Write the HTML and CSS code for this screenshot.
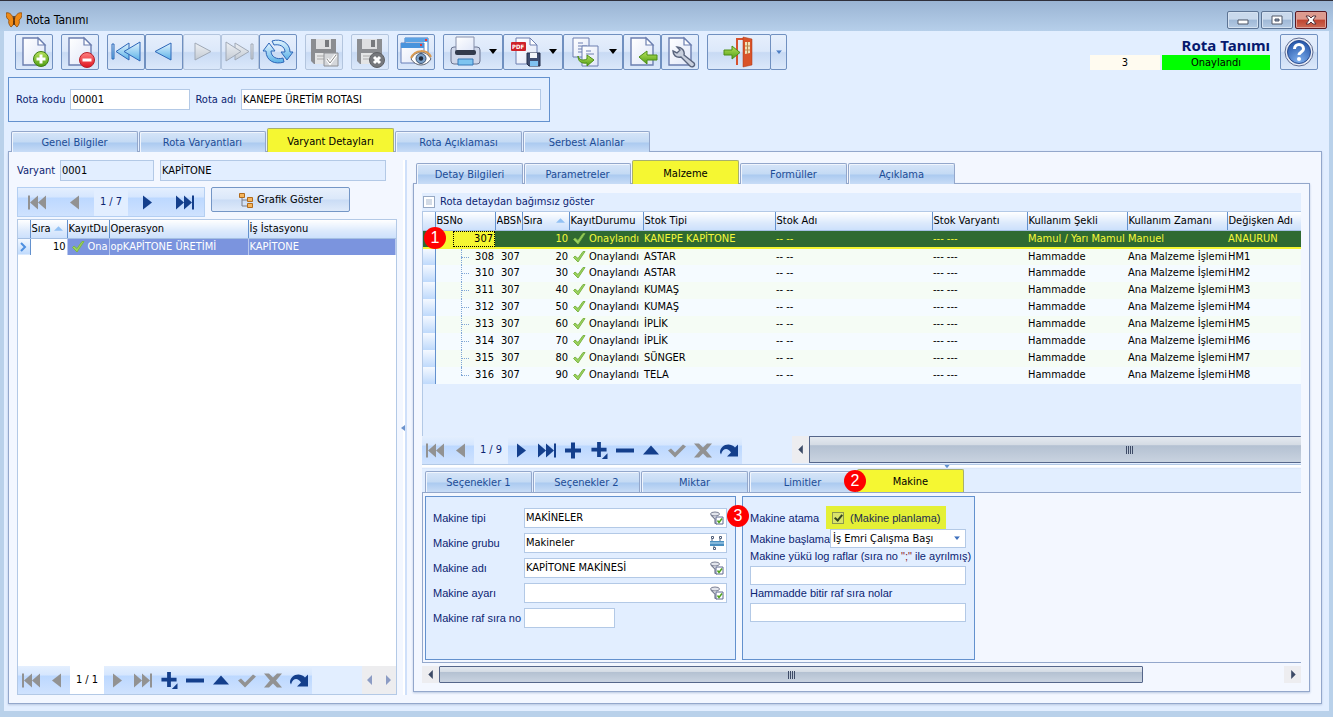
FILE: index.html
```html
<!DOCTYPE html>
<html lang="tr">
<head>
<meta charset="utf-8">
<title>Rota Tanımı</title>
<link rel="stylesheet" href="styles.css">
</head>
<body>
<svg class="defs" aria-hidden="true">
  <defs>
    <linearGradient id="blue" x1="0" y1="0" x2="0" y2="1"><stop offset="0" stop-color="#e2f4ff"/><stop offset="1" stop-color="#58b0e6"/></linearGradient>
    <linearGradient id="silver" x1="0" y1="0" x2="0" y2="1"><stop offset="0" stop-color="#eef1f5"/><stop offset="1" stop-color="#c3cad3"/></linearGradient>
    <linearGradient id="paper" x1="0" y1="0" x2="1" y2="1"><stop offset="0" stop-color="#fff"/><stop offset="1" stop-color="#dfe6f8"/></linearGradient>
    <linearGradient id="green" x1="0" y1="0" x2="0" y2="1"><stop offset="0" stop-color="#b9e35c"/><stop offset="1" stop-color="#4f9d14"/></linearGradient>
    <linearGradient id="red" x1="0" y1="0" x2="0" y2="1"><stop offset="0" stop-color="#ff8080"/><stop offset="1" stop-color="#e0151f"/></linearGradient>
    <radialGradient id="helpfill" cx=".5" cy=".9" r=".9"><stop offset="0" stop-color="#7fb0ee"/><stop offset="1" stop-color="#2354a8"/></radialGradient>
  </defs>
  <symbol id="n-first" viewBox="0 0 20 16"><path d="M1 1h2v14H1zM11 1v14L3 8zM19 1v14l-8-7z"/></symbol>
  <symbol id="n-last" viewBox="0 0 20 16"><path d="M17 1h2v14h-2zM9 1v14l8-7zM1 1v14l8-7z"/></symbol>
  <symbol id="n-prev" viewBox="0 0 20 16"><path d="M14 1v14L5 8z"/></symbol>
  <symbol id="n-next" viewBox="0 0 20 16"><path d="M6 1v14l9-7z"/></symbol>
  <symbol id="n-plus" viewBox="0 0 20 16"><path d="M8 0h4v6h6v4h-6v6H8v-6H2V6h6z"/></symbol>
  <symbol id="n-plusdot" viewBox="0 0 20 18"><path d="M8 0h4v6h6v4h-6v6H8v-6H2V6h6zM19 12v6h-6z"/></symbol>
  <symbol id="n-minus" viewBox="0 0 20 16"><path d="M1 6h18v4H1z"/></symbol>
  <symbol id="n-up" viewBox="0 0 20 16"><path d="M10 3l8 9H2z"/></symbol>
  <symbol id="n-check" viewBox="0 0 20 16"><path d="M1 8l3-2 4 4 8-8 3 2L8 15z"/></symbol>
  <symbol id="n-x" viewBox="0 0 20 16"><path d="M1 1h5l4 4 4-4h5l-6 7 6 7h-5l-4-4-4 4H1l6-7z"/></symbol>
  <symbol id="n-redo" viewBox="0 0 20 16"><path d="M1 10C1 3 10-1 16 5l3-3v12H8l4-4C9 5 4 5 2 12z"/></symbol>
  <symbol id="ok" viewBox="0 0 14 14"><path d="M1.500 8.500l1.500-1.500 3 2.500 5-7h2L6 13z" fill="#9ad25c" stroke="#7db548" stroke-width="1"/></symbol>
  <symbol id="page" viewBox="0 0 32 32"><path d="M5 2h15l7 7v20H5z" fill="url(#paper)" stroke="#6c7fb0" stroke-width="1.4"/><path d="M20 2v7h7z" fill="#fff" stroke="#6c7fb0" stroke-width="1.2"/></symbol>
  <symbol id="floppy" viewBox="0 0 32 32"><path d="M3 3h25v25H6l-3-3z" fill="#8b8d91"/><path d="M8 3h15v10H8z" fill="#dedfe1"/><path d="M17 4h4v7h-4z" fill="#77797d"/><path d="M7 17h18v11H7z" fill="#e4e5e6"/><path d="M9 20h14M9 23h14" stroke="#aaa"/></symbol>
  <symbol id="lookup" viewBox="0 0 14 14"><ellipse cx="5" cy="3" rx="4.500" ry="2" fill="#e3e5ec" stroke="#7b8094"/><path d="M1 4l4 4v4l2 1" fill="none" stroke="#7b8094" stroke-width="1.3"/><path d="M6 6h7v7H6z" fill="#fff" stroke="#5e6890"/><path d="M7.500 9.500l1.500 2 3-4" fill="none" stroke="#4fa31c" stroke-width="1.500"/></symbol>
  <symbol id="tri" viewBox="0 0 8 6"><path d="M0 0h8L4 5z"/></symbol>
</svg>

<header class="titlebar">
  <svg class="i16" viewBox="0 0 16 16"><path d="M7.500 7C6 2 3 0 0 1c0 4 1 6 3 7-1 2 0 5 2 7 2-1 3-4 3-6 0 2 1 5 3 6 2-2 3-5 2-7 2-1 3-3 3-7-3-1-6 1-7.500 6z" fill="#ef8a16" stroke="#8a4a0c" stroke-width=".8"/><path d="M8 4v9" stroke="#4b2708" stroke-width="1.500"/></svg>
  <h1 class="title">Rota Tanımı</h1>
  <button class="win" aria-label="Küçült"><svg viewBox="0 0 30 16"><path d="M10 8h10v4H10z" fill="#fff" stroke="#4e5766"/></svg></button>
  <button class="win" aria-label="Büyüt"><svg viewBox="0 0 30 16"><path d="M10 4h10v8H10z" fill="#fff" stroke="#4e5766"/><path d="M13 7h4v2h-4z" fill="#8296b3" stroke="#4e5766"/></svg></button>
  <button class="win win-close" aria-label="Kapat"><svg viewBox="0 0 30 16"><path d="M10 4h3l2 2 2-2h3l-3 4 3 4h-3l-2-2-2 2h-3l3-4z" fill="#fff" stroke="#55323a"/></svg></button>
</header>

<main class="frame">
  <div class="toolbar">
    <div class="group"><button class="tool" aria-label="Yeni"><svg viewBox="0 0 32 32"><use href="#page"/><circle cx="23" cy="23" r="7.500" fill="url(#green)" stroke="#3e7d12"/><path d="M23 18.500v9M18.500 23h9" stroke="#fff" stroke-width="3"/></svg></button></div>
    <div class="group"><button class="tool" aria-label="Sil"><svg viewBox="0 0 32 32"><use href="#page"/><circle cx="23" cy="24" r="7.500" fill="url(#red)" stroke="#b5202a"/><path d="M18.500 24h9" stroke="#fff" stroke-width="3"/></svg></button></div>
    <div class="group">
      <button class="tool" aria-label="İlk"><svg viewBox="0 0 32 32"><g fill="url(#blue)" stroke="#2d66b8"><path d="M2 8h2v15H2z"/><path d="M19 7v17L6 15.500z"/><path d="M30 6v19L14 15.500z"/></g></svg></button>
      <button class="tool" aria-label="Önceki"><svg viewBox="0 0 32 32"><path d="M23 7v17L7 15.500z" fill="url(#blue)" stroke="#2d66b8"/></svg></button>
      <button class="tool" disabled aria-label="Sonraki"><svg viewBox="0 0 32 32"><path d="M9 7v17l16-8.500z" fill="url(#silver)" stroke="#a0a9b6"/></svg></button>
      <button class="tool" disabled aria-label="Son"><svg viewBox="0 0 32 32"><g fill="url(#silver)" stroke="#a0a9b6"><path d="M11 7v17l14-8.500z"/><path d="M2 6v19l15-9.500z"/><path d="M27 8h2v15h-2z"/></g></svg></button>
      <button class="tool" aria-label="Yenile"><svg viewBox="0 0 32 32"><g fill="url(#blue)" stroke="#2d66b8"><path d="M1 15l6-8 6 8h-4c0 6 6 9 12 7l1 4C13 29 4 25 4 15z"/><path d="M31 16l-6 8-6-8h4c0-6-6-8-11-7L10 5c9-3 18 2 18 11z"/></g></svg></button>
    </div>
    <div class="group"><button class="tool" disabled aria-label="Kaydet"><svg viewBox="0 0 32 32"><use href="#floppy"/><path d="M16 17h14v13H16z" fill="#d5d7da" stroke="#8e9094"/><path d="M19 23l3 4 6-8" stroke="#fff" stroke-width="3" fill="none"/><path d="M19 23l3 4 6-8" stroke="#888" fill="none"/></svg></button></div>
    <div class="group"><button class="tool" disabled aria-label="Vazgeç"><svg viewBox="0 0 32 32"><use href="#floppy"/><circle cx="23" cy="24" r="7.500" fill="#76787c" stroke="#5f6165"/><path d="M20 21l6 6M26 21l-6 6" stroke="#fff" stroke-width="3"/></svg></button></div>
    <div class="group"><button class="tool" aria-label="İzle"><svg viewBox="0 0 32 32"><path d="M5 2h23v18H5z" fill="#fff" stroke="#3d7bc8"/><path d="M5 2h23v4H5z" fill="#5ca3e4"/><path d="M25 3h2v2h-2z" fill="#e33"/><path d="M1 7h23v20H1z" fill="url(#paper)" stroke="#6880b8"/><path d="M1 7h23v5H1z" fill="#4993dc"/><path d="M20 8h2v2h-2z" fill="#e33"/><path d="M11 23c5-9 15-9 20 0-5 8-15 8-20 0z" fill="#fff" stroke="#5a5f6c"/><path d="M11 22c4-9 16-9 20-1" fill="none" stroke="#d99a51" stroke-width="2"/><circle cx="21" cy="22.500" r="5" fill="#7ba0c8" stroke="#3c5270"/><circle cx="21" cy="22.500" r="2.200" fill="#1e2838"/></svg></button></div>
    <div class="group">
      <button class="tool tool-menu" aria-label="Yazdır"><svg viewBox="0 0 32 32"><rect x="1" y="11" width="29" height="17" rx="3" fill="#cfd7ea" stroke="#68738f"/><path d="M6 1h18v14H6z" fill="url(#paper)" stroke="#8690ab"/><rect x="5" y="14" width="21" height="5" rx="2" fill="#333b4d"/><path d="M8 23h15v6H8z" fill="#7dc4f0" stroke="#3979b8"/></svg><svg class="caret" viewBox="0 0 8 6"><use href="#tri"/></svg></button>
      <button class="tool tool-menu" aria-label="PDF kaydet"><svg viewBox="0 0 32 32"><path d="M6 2h14l7 7v19H6z" fill="url(#paper)" stroke="#6c7fb0"/><path d="M20 2v7h7z" fill="#fff" stroke="#6c7fb0"/><rect x="1" y="6" width="15" height="9" rx="1" fill="#cf2229"/><text x="2" y="13" class="pdf">PDF</text><path d="M17 17h13v13H19l-2-2z" fill="#3f4d70" stroke="#222d48"/><path d="M20 17h7v5h-7z" fill="#f3f5fa"/><path d="M20 25h8v5h-8z" fill="#7fc1f0"/></svg><svg class="caret" viewBox="0 0 8 6"><use href="#tri"/></svg></button>
      <button class="tool tool-menu" aria-label="Kopyala"><svg viewBox="0 0 32 32"><path d="M3 2h16v19H3z" fill="url(#paper)" stroke="#6c7fb0"/><path d="M8 7h5M8 10h9M8 13h9M8 16h5" stroke="#6c7fb0"/><path d="M12 10h16v20H12z" fill="url(#paper)" stroke="#6c7fb0"/><path d="M16 15h5M16 18h8" stroke="#6c7fb0"/><path d="M8 20c1 4 5 5 9 3v-4l7 5-7 6v-3C11 28 8 25 8 20z" fill="url(#green)" stroke="#4d8e17"/></svg><svg class="caret" viewBox="0 0 8 6"><use href="#tri"/></svg></button>
      <button class="tool" aria-label="Geri al"><svg viewBox="0 0 32 32"><use href="#page"/><path d="M13 21l8-6v4h10v5H21v4z" fill="url(#green)" stroke="#4d8e17"/></svg></button>
      <button class="tool" aria-label="Ayarlar"><svg viewBox="0 0 32 32"><use href="#page"/><path d="M13 11c5 0 8 4 7 8l10 8c2 3-2 5-4 3l-9-9c-5 1-8-2-8-6l4 2 3-3z" fill="#c8cfdd" stroke="#59647d" stroke-width="1.400"/></svg></button>
    </div>
    <div class="group">
      <button class="tool tool-exit" aria-label="Çıkış"><svg viewBox="0 0 32 32"><path d="M14 29V3h9" fill="none" stroke="#d6512e" stroke-width="2"/><path d="M20 1l9 2v26l-9 2z" fill="#d95328" stroke="#a93716" stroke-width=".5"/><path d="M22 6h5v11l-5 1z" fill="#f2e2b8"/><path d="M24.500 6v12M22 10h5M22 14h5" stroke="#b9864a"/><path d="M1 14h8v-4l8 6.500L9 23v-4H1z" fill="url(#green)" stroke="#4d8e17"/></svg></button><button class="tool tool-split" aria-label="Çıkış seçenekleri"><svg viewBox="0 0 8 6"><use href="#tri"/></svg></button>
    </div>
    <div class="status">
      <h2 class="heading">Rota Tanımı</h2>
      <div class="chips"><span class="chip chip-no">3</span><span class="chip chip-ok">Onaylandı</span></div>
    </div>
    <button class="tool" aria-label="Yardım"><svg viewBox="0 0 32 32"><circle cx="16" cy="16" r="14" fill="#e8ecf6" stroke="#5d6b90"/><circle cx="16" cy="16" r="11.500" fill="url(#helpfill)" stroke="#2a4c90"/><path d="M11.500 13c0-6 9-6 9 0 0 3-4.500 3-4.500 6" fill="none" stroke="#fff" stroke-width="3"/><circle cx="16" cy="23" r="2" fill="#fff"/></svg></button>
  </div>

  <section class="keybox">
    <label for="kod">Rota kodu</label><input id="kod" class="field w120" value="00001">
    <label for="ad">Rota adı</label><input id="ad" class="field w300" value="KANEPE ÜRETİM ROTASI">
  </section>

  <div class="tabs tabs-main" role="tablist">
    <button class="tab" role="tab">Genel Bilgiler</button><button class="tab" role="tab">Rota Varyantları</button><button class="tab on" role="tab" aria-selected="true">Varyant Detayları</button><button class="tab" role="tab">Rota Açıklaması</button><button class="tab" role="tab">Serbest Alanlar</button>
  </div>

  <section class="sheet main-sheet">
    <div class="left">
      <div class="variant">
        <label for="var">Varyant</label><input id="var" class="field ro w94" value="0001" readonly><input class="field ro w226" value="KAPİTONE" readonly aria-label="Varyant adı">
      </div>
      <div class="navrow">
        <div class="nav nav-wide">
          <button disabled aria-label="İlk"><svg><use href="#n-first"/></svg></button><button disabled aria-label="Önceki"><svg><use href="#n-prev"/></svg></button><span class="count">1 / 7</span><button aria-label="Sonraki"><svg><use href="#n-next"/></svg></button><button aria-label="Son"><svg><use href="#n-last"/></svg></button>
        </div>
        <button class="graph"><svg class="i16" viewBox="0 0 16 16"><path d="M4 5v9h6M4 8h6" fill="none" stroke="#7d7d86"/><g fill="#f5b55c" stroke="#b06a1c"><path d="M1.500 1.500h5v4h-5zM9.500 5.500h5v4h-5zM9.500 11.500h5v4h-5z"/></g></svg>Grafik Göster</button>
      </div>
      <div class="grid-box">
        <table class="grid ops">
          <colgroup><col class="c12"><col class="c37"><col class="c42"><col class="c139"><col></colgroup>
          <thead><tr><th></th><th class="sort">Sıra<svg class="asc" viewBox="0 0 10 5"><path d="M5 0l5 5H0z"/></svg></th><th><div class="clip">KayıtDur</div></th><th>Operasyon</th><th>İş İstasyonu</th></tr></thead>
          <tbody><tr class="cur"><td class="ind"><svg viewBox="0 0 8 10"><path d="M2 1l4 4-4 4" fill="none" stroke="#4d8fe0" stroke-width="2"/></svg></td><td class="num plain">10</td><td class="st"><svg class="ok"><use href="#ok"/></svg>Ona</td><td>opKAPİTONE ÜRETİMİ</td><td>KAPİTONE</td></tr></tbody>
        </table>
        <div class="grid-foot">
          <div class="nav">
            <button disabled aria-label="İlk"><svg><use href="#n-first"/></svg></button><button disabled aria-label="Önceki"><svg><use href="#n-prev"/></svg></button><span class="count count-white">1 / 1</span><button disabled aria-label="Sonraki"><svg><use href="#n-next"/></svg></button><button disabled aria-label="Son"><svg><use href="#n-last"/></svg></button><button aria-label="Ekle"><svg><use href="#n-plusdot"/></svg></button><button aria-label="Sil"><svg><use href="#n-minus"/></svg></button><button aria-label="Düzenle"><svg><use href="#n-up"/></svg></button><button disabled aria-label="Kaydet"><svg><use href="#n-check"/></svg></button><button disabled aria-label="Vazgeç"><svg><use href="#n-x"/></svg></button><button aria-label="Yenile"><svg><use href="#n-redo"/></svg></button>
          </div>
          <div class="mini-scroll"><svg viewBox="0 0 34 28"><path d="M10 9v10l-5-5zM24 9v10l5-5z" fill="#8c9cc4"/></svg></div>
        </div>
      </div>
    </div>

    <div class="splitter"><svg viewBox="0 0 4 6"><path d="M4 0v6L0 3z" fill="#6c93cc"/></svg></div>

    <div class="right">
      <div class="tabs" role="tablist">
        <button class="tab" role="tab">Detay Bilgileri</button><button class="tab" role="tab">Parametreler</button><button class="tab on" role="tab" aria-selected="true">Malzeme</button><button class="tab" role="tab">Formüller</button><button class="tab" role="tab">Açıklama</button>
      </div>
      <div class="sheet detail">
        <label class="indep"><input type="checkbox" class="box">Rota detaydan bağımsız göster</label>
        <div class="mat-area">
          <table class="grid mats">
            <colgroup><col class="c12"><col class="c60"><col class="c27"><col class="c47"><col class="c74"><col class="c132"><col class="c157"><col class="c95"><col class="c100"><col class="c100"><col></colgroup>
            <thead><tr><th></th><th>BSNo</th><th><div class="clip">ABSN</div></th><th class="sort">Sıra<svg class="asc" viewBox="0 0 10 5"><path d="M5 0l5 5H0z"/></svg></th><th>KayıtDurumu</th><th>Stok Tipi</th><th>Stok Adı</th><th>Stok Varyantı</th><th>Kullanım Şekli</th><th>Kullanım Zamanı</th><th>Değişken Adı</th></tr></thead>
            <tbody>
              <tr class="sel"><td class="ind"></td><td class="root"><span class="key">307</span></td><td></td><td class="num">10</td><td class="st"><svg class="ok"><use href="#ok"/></svg>Onaylandı</td><td>KANEPE KAPİTONE</td><td>-- --</td><td>--- ---</td><td>Mamul / Yarı Mamul</td><td>Manuel</td><td>ANAURUN</td></tr>
              <tr><td class="ind"></td><td class="num tree">308</td><td class="par">307</td><td class="num">20</td><td class="st"><svg class="ok"><use href="#ok"/></svg>Onaylandı</td><td>ASTAR</td><td>-- --</td><td>--- ---</td><td>Hammadde</td><td>Ana Malzeme İşlemi</td><td>HM1</td></tr>
              <tr><td class="ind"></td><td class="num tree">310</td><td class="par">307</td><td class="num">30</td><td class="st"><svg class="ok"><use href="#ok"/></svg>Onaylandı</td><td>ASTAR</td><td>-- --</td><td>--- ---</td><td>Hammadde</td><td>Ana Malzeme İşlemi</td><td>HM2</td></tr>
              <tr><td class="ind"></td><td class="num tree">311</td><td class="par">307</td><td class="num">40</td><td class="st"><svg class="ok"><use href="#ok"/></svg>Onaylandı</td><td>KUMAŞ</td><td>-- --</td><td>--- ---</td><td>Hammadde</td><td>Ana Malzeme İşlemi</td><td>HM3</td></tr>
              <tr><td class="ind"></td><td class="num tree">312</td><td class="par">307</td><td class="num">50</td><td class="st"><svg class="ok"><use href="#ok"/></svg>Onaylandı</td><td>KUMAŞ</td><td>-- --</td><td>--- ---</td><td>Hammadde</td><td>Ana Malzeme İşlemi</td><td>HM4</td></tr>
              <tr><td class="ind"></td><td class="num tree">313</td><td class="par">307</td><td class="num">60</td><td class="st"><svg class="ok"><use href="#ok"/></svg>Onaylandı</td><td>İPLİK</td><td>-- --</td><td>--- ---</td><td>Hammadde</td><td>Ana Malzeme İşlemi</td><td>HM5</td></tr>
              <tr><td class="ind"></td><td class="num tree">314</td><td class="par">307</td><td class="num">70</td><td class="st"><svg class="ok"><use href="#ok"/></svg>Onaylandı</td><td>İPLİK</td><td>-- --</td><td>--- ---</td><td>Hammadde</td><td>Ana Malzeme İşlemi</td><td>HM6</td></tr>
              <tr><td class="ind"></td><td class="num tree">315</td><td class="par">307</td><td class="num">80</td><td class="st"><svg class="ok"><use href="#ok"/></svg>Onaylandı</td><td>SÜNGER</td><td>-- --</td><td>--- ---</td><td>Hammadde</td><td>Ana Malzeme İşlemi</td><td>HM7</td></tr>
              <tr><td class="ind"></td><td class="num tree last">316</td><td class="par">307</td><td class="num">90</td><td class="st"><svg class="ok"><use href="#ok"/></svg>Onaylandı</td><td>TELA</td><td>-- --</td><td>--- ---</td><td>Hammadde</td><td>Ana Malzeme İşlemi</td><td>HM8</td></tr>
            </tbody>
          </table>
          <span class="badge badge-row">1</span>
        </div>
        <div class="mat-foot">
          <div class="nav">
            <button disabled aria-label="İlk"><svg><use href="#n-first"/></svg></button><button disabled aria-label="Önceki"><svg><use href="#n-prev"/></svg></button><span class="count">1 / 9</span><button aria-label="Sonraki"><svg><use href="#n-next"/></svg></button><button aria-label="Son"><svg><use href="#n-last"/></svg></button><button aria-label="Ekle"><svg><use href="#n-plus"/></svg></button><button aria-label="Alt ekle"><svg><use href="#n-plusdot"/></svg></button><button aria-label="Sil"><svg><use href="#n-minus"/></svg></button><button aria-label="Düzenle"><svg><use href="#n-up"/></svg></button><button disabled aria-label="Kaydet"><svg><use href="#n-check"/></svg></button><button disabled aria-label="Vazgeç"><svg><use href="#n-x"/></svg></button><button aria-label="Yenile"><svg><use href="#n-redo"/></svg></button>
          </div>
          <div class="scroll scroll-tall">
            <button class="arrow" aria-label="Sola"><svg viewBox="0 0 6 10"><path d="M5 0v10L0 5z"/></svg></button>
            <div class="thumb thumb-cut"><i></i><i></i><i></i><i></i></div>
          </div>
        </div>
        <div class="hsplit"><svg viewBox="0 0 8 6"><use href="#tri"/></svg></div>
        <div class="tabs tabs-low" role="tablist">
          <button class="tab" role="tab">Seçenekler 1</button><button class="tab" role="tab">Seçenekler 2</button><button class="tab" role="tab">Miktar</button><button class="tab" role="tab">Limitler</button><button class="tab on" role="tab" aria-selected="true">Makine<span class="badge badge-tab">2</span></button>
        </div>
        <div class="forms">
          <div class="form form-machine">
            <label for="tip">Makine tipi</label><div class="field look"><input id="tip" value="MAKİNELER"><svg class="ok"><use href="#lookup"/></svg></div>
            <label for="grup">Makine grubu</label><div class="field look"><input id="grup" value="Makineler"><svg class="ok" viewBox="0 0 14 14"><path d="M2 3v3M10 3v3M4 9v3" stroke="#51617c"/><path d="M0 5h14v5H0z" fill="#4a8fc0"/><path d="M0 7h14" stroke="#bfe0f5"/><g fill="#fff" stroke="#51617c"><path d="M1.500.500h2v2h-2zM9.500.500h2v2h-2zM3.500 11.500h2v2h-2z"/></g></svg></div>
            <label for="mad">Makine adı</label><div class="field look"><input id="mad" value="KAPİTONE MAKİNESİ"><svg class="ok"><use href="#lookup"/></svg></div>
            <label for="ayar">Makine ayarı</label><div class="field look"><input id="ayar"><svg class="ok"><use href="#lookup"/></svg></div>
            <label for="raf">Makine raf sıra no</label><input id="raf" class="field w91">
          </div>
          <div class="form form-plan">
            <span class="badge badge-form">3</span>
            <div class="pair"><span class="cap cap-mark">Makine atama</span><label class="mark"><input type="checkbox" class="box" checked>(Makine planlama)</label></div>
            <div class="pair"><label class="cap" for="bas">Makine başlama</label><span class="pick"><select id="bas"><option>İş Emri Çalışma Başı</option></select><svg viewBox="0 0 8 6"><use href="#tri"/></svg></span></div>
            <label class="line" for="log">Makine yükü log raflar (sıra no <b class="semi">";"</b> ile ayrılmış)</label>
            <input id="log" class="field wide">
            <label class="line" for="ham">Hammadde bitir raf sıra nolar</label>
            <input id="ham" class="field wide">
          </div>
        </div>
        <div class="scroll">
          <button class="arrow" aria-label="Sola"><svg viewBox="0 0 6 10"><path d="M5 0v10L0 5z"/></svg></button>
          <div class="track"><div class="thumb"><i></i><i></i><i></i><i></i></div></div>
          <button class="arrow" aria-label="Sağa"><svg viewBox="0 0 6 10"><path d="M1 0v10l5-5z"/></svg></button>
        </div>
      </div>
    </div>
  </section>
</main>
</body>
</html>
```

FILE: styles.css
```css
:root {
  --ground: #e2eeff;
  --sheet: #f3f7ff;
  --edge: #93a7cb;
  --line: #6391ce;
  --input: #b3c9e6;
  --ink: #0b2472;
  --yellow: #f5f732;
}

* { box-sizing: border-box; }

body {
  margin: 0;
  min-height: 100vh;
  display: flex;
  flex-direction: column;
  background: #b9d1ea;
  color: #000;
  font: 11px/14px "DejaVu Sans Condensed", "DejaVu Sans", sans-serif;
}

button, input, select { font: inherit; color: inherit; margin: 0; padding: 0; border: 0; }
button { background: none; }
label { color: var(--ink); white-space: nowrap; }
svg { display: block; flex: none; }
.defs { position: absolute; width: 0; height: 0; }
.i16 { width: 16px; height: 16px; }

/* Window title */
.titlebar {
  height: 31px;
  flex: none;
  display: flex;
  align-items: center;
  gap: 2px;
  padding: 7px 6px 0;
  border-top: 1px solid #2f2f3a;
  background: linear-gradient(#9ab4d3, #b6cfea);
}
.title { flex: 1; margin: 0 0 0 2px; font-size: 12px; font-weight: 400; }
.win {
  width: 32px;
  height: 18px;
  border: 1px solid #5d7494;
  border-radius: 2px;
  box-shadow: inset 0 0 0 1px #d5e2f1;
  background: linear-gradient(#c9d9ec 45%, #9fb8d6 50%, #b5cbe4);
}
.win-close { border-color: #5a1822; box-shadow: inset 0 0 0 1px #dda097; background: linear-gradient(#dd9a8e 45%, #bf4430 50%, #cc6a55); }

.frame {
  flex: 1;
  display: flex;
  flex-direction: column;
  margin: 0 4px 6px;
  padding: 3px 7px 7px 4px;
  background: var(--ground);
}

/* Toolbar */
.toolbar { display: flex; gap: 8px; padding: 0 4px 0 7px; }
.group { display: flex; }
.tool {
  width: 38px;
  height: 36px;
  display: flex;
  align-items: center;
  justify-content: center;
  border: 1px solid #7090c0;
  border-radius: 2px;
  background: linear-gradient(#e6effc, #dce8fa 48%, #c8daf4 52%, #dbe8fa);
}
.tool > svg { width: 32px; height: 32px; }
.tool:disabled { border-color: #b3c5de; }
.tool-menu { width: 60px; gap: 7px; }
.tool > .caret { width: 8px; height: 6px; }
.tool-exit { width: 64px; }
.tool-split { width: 17px; margin-left: -1px; }
.tool-split > svg { width: 6px; height: 5px; fill: #4d7ec4; }
.pdf { font: bold 6px "DejaVu Sans Condensed", sans-serif; fill: #fff; }
.status { margin-left: auto; margin-right: 2px; }
.heading { margin: 3px 0 1px; color: #06196e; font: bold 15px/17px "Noto Sans", sans-serif; text-align: right; }
.chips { display: flex; gap: 2px; text-align: center; line-height: 15px; }
.chip-no { width: 70px; background: #fffbf0; }
.chip-ok { width: 108px; background: #0f0; }

/* Fields */
.field { height: 21px; padding: 0 1px; border: 1px solid var(--input); background: #fff; }
.ro { background: var(--ground); }
.w91 { width: 91px; }
.w94 { width: 94px; }
.w120 { width: 120px; }
.w226 { width: 226px; }
.w300 { width: 300px; }
.box {
  width: 12px;
  height: 12px;
  flex: none;
  appearance: none;
  border: 1px solid #97a9c4;
  box-shadow: inset 0 0 0 2px #fff;
  background: #d3dbe6;
}

.keybox {
  align-self: flex-start;
  height: 45px;
  display: flex;
  align-items: center;
  gap: 5px;
  margin-top: 7px;
  padding: 0 8px 0 7px;
  border: 1px solid var(--line);
}

/* Tabs */
.tabs { display: flex; align-items: flex-end; gap: 1px; height: 24px; padding-left: 3px; flex: none; }
.tab {
  position: relative;
  width: 107px;
  height: 21px;
  padding-top: 2px;
  border: 1px solid var(--edge);
  border-bottom: 0;
  border-radius: 2px 2px 0 0;
  color: #1c4c96;
  box-shadow: inset 1px 1px #f0f5fd;
  background: linear-gradient(#d6e5f8, #c4daf4 50%, #abcaf0 55%, #c8dcf6);
}
.tabs-main { margin-top: 6px; }
.tabs-main .tab { width: 127px; }
.tab.on { height: 24px; z-index: 1; border-color: #a8b06c; color: #000; background: var(--yellow); box-shadow: none; }

.sheet { margin-top: -1px; border: 1px solid var(--edge); background: var(--sheet); box-shadow: 0 1px 2px #b9c8e0; }
.main-sheet { flex: 1; display: flex; padding: 8px 11px 8px 8px; }

/* Variant pane */
.left { width: 380px; flex: none; display: flex; flex-direction: column; }
.variant { display: flex; align-items: center; gap: 6px; }
.variant label { width: 37px; }
.navrow { display: flex; gap: 6px; margin-top: 6px; }
.graph {
  width: 139px;
  height: 25px;
  display: flex;
  align-items: center;
  justify-content: center;
  gap: 3px;
  border: 1px solid #7496c6;
  border-radius: 2px;
  background: linear-gradient(#e8f0fc, #dbe8fa 48%, #cadcf5 52%, #dfeafa);
}

.nav {
  height: 28px;
  display: flex;
  align-items: center;
  background: linear-gradient(#e4effe, #d5e6fe 33%, #bcd8ff 35%, #cfe2fe);
}
.nav button { width: 26px; height: 100%; display: flex; align-items: center; justify-content: center; fill: #143f8c; }
.nav button:disabled { fill: #929292; }
.nav svg { width: 20px; height: 17px; }
.nav-wide { height: 30px; border: 1px solid #b4cff2; }
.nav-wide button { width: 38px; }
.count { width: 34px; height: 100%; display: flex; align-items: center; justify-content: center; background: var(--ground); color: var(--ink); }
.count-white { background: #fff; color: #000; }

.grid-box { flex: 1; display: flex; flex-direction: column; margin-top: 2px; border: 1px solid var(--input); background: #fff; }
.grid-foot { display: flex; justify-content: space-between; margin-top: auto; background: var(--ground); }
.mini-scroll { width: 34px; background: #ededef; }
.mini-scroll svg { height: 28px; }

/* Grids */
.grid { width: 100%; table-layout: fixed; border-collapse: collapse; }
.grid th {
  height: 18px;
  padding: 0 1px;
  overflow: hidden;
  text-align: left;
  white-space: nowrap;
  font-weight: 400;
  border-right: 1px solid var(--line);
  border-bottom: 1px solid #a5bfe2;
  background: linear-gradient(#fff, #ddeafc 60%, #cce0fc);
}
.grid th:last-child { border-right: 0; }
.grid td { height: 17px; padding: 0 1px; overflow: hidden; white-space: nowrap; }
.grid .sort { position: relative; }
.clip { overflow: hidden; }
.asc { position: absolute; right: 4px; top: 6px; width: 9px; height: 5px; fill: #92c1f4; }
.grid .num { text-align: right; }
.grid .ind { border-right: 1px solid var(--line); background: linear-gradient(#f5f9ff, #bfdafc); }
.ind svg { width: 8px; height: 10px; }
.ok { width: 14px; height: 14px; }
.st .ok { display: inline-block; vertical-align: -3px; margin: -2px 3px 0 2px; }
.c12 { width: 12px; }
.c27 { width: 27px; }
.c37 { width: 37px; }
.c42 { width: 42px; }
.c47 { width: 47px; }
.c60 { width: 60px; }
.c74 { width: 74px; }
.c95 { width: 95px; }
.c100 { width: 100px; }
.c132 { width: 132px; }
.c139 { width: 139px; }
.c157 { width: 157px; }
.cur td { background: #7b94de; color: #fff; border-right: 1px solid #b9c8ee; }
.cur .plain { background: #fff; color: #000; }

.mats tbody tr { background: #f5fcf5; }
.mats tbody tr:nth-child(odd) { background: #f5fbff; }
.mats .sel td { background: #2f6a31; color: #f4f73a; border-top: 1px dotted #c0c850; border-bottom: 2px solid var(--yellow); }
.mats .sel .root { padding: 0; background: var(--yellow); }
.key { display: block; margin-left: 17px; padding-right: 1px; border: 1px dotted #000; color: #000; text-align: right; line-height: 14px; }
.mats .tree { position: relative; }
.tree::before, .tree::after { content: ""; position: absolute; left: 25px; top: 0; }
.tree::before { height: 100%; border-left: 1px dotted #7fa6d6; }
.tree::after { top: 50%; width: 8px; border-top: 1px dotted #7fa6d6; }
.tree.last::before { height: 50%; }
.mats .par { padding-left: 6px; }

/* Splitter */
.splitter { width: 16px; flex: none; display: flex; align-items: center; justify-content: center; border-right: 5px solid var(--sheet); background: linear-gradient(90deg, #f3f7ff 6px, #fff 6px, #fff 8px, #cfe0fa 8px, #cfe0fa 10px, #f3f7ff 10px); }
.splitter svg { width: 4px; height: 6px; }

/* Detail pane */
.right { flex: 1; min-width: 0; display: flex; flex-direction: column; padding-bottom: 3px; }
.detail { flex: 1; display: flex; flex-direction: column; padding: 9px 8px 8px; }
.indep { height: 18px; display: flex; align-items: center; gap: 5px; padding-left: 1px; background: var(--ground); }
.mat-area { position: relative; flex: 1; border-top: 1px solid var(--input); border-left: 1px solid var(--input); background: var(--ground); }
.mat-foot { display: flex; justify-content: space-between; align-items: stretch; gap: 50px; background: var(--ground); border-bottom: 1px solid var(--input); }

.scroll { display: flex; height: 17px; margin-top: 3px; background: var(--sheet); }
.scroll-tall { flex: 1; height: 27px; margin: 0; background: none; }
.arrow { width: 17px; flex: none; display: flex; align-items: center; justify-content: center; background: #ededf0; fill: #3c4a66; }
.arrow svg { width: 6px; height: 9px; }
.track { flex: 1; padding-right: 16%; }
.thumb {
  flex: 1;
  height: 100%;
  display: flex;
  align-items: center;
  justify-content: center;
  gap: 1px;
  border: 1px solid #55668a;
  border-radius: 1px;
  background: linear-gradient(#e4e9f0, #d5dce5 30%, #b4c1d2 35%, #c9d3e0);
}
.thumb i { width: 1px; height: 8px; background: #3e4b66; }
.thumb-cut { border-right: 0; padding-left: 147px; }

.hsplit { height: 4px; display: flex; justify-content: center; padding-left: 171px; background: linear-gradient(#fff 50%, #cfe0fa); }
.hsplit svg { width: 6px; height: 4px; fill: var(--line); }
.tabs-low { background: var(--ground); border-bottom: 1px solid var(--edge); }
.tabs-low .tab.on { height: 23px; }

/* Machine forms */
.forms { display: flex; gap: 6px; padding: 3px 2px 2px; border-bottom: 1px solid var(--edge); border-left: 1px solid var(--edge); }
.form { height: 164px; border: 1px solid var(--line); background: var(--ground); }
.form label, .form .cap { font-family: "Liberation Sans", Arial, sans-serif; }
.form-machine { width: 311px; display: grid; grid-template-columns: 85px 203px; gap: 5px 6px; align-content: start; align-items: center; padding: 11px 7px; }
.form-machine .field { height: 20px; }
.look { display: flex; align-items: center; padding-right: 2px; }
.look input { flex: 1; min-width: 0; background: none; }
.form-plan { position: relative; width: 233px; display: flex; flex-direction: column; padding: 9px 8px 0 7px; }
.pair { display: flex; align-items: center; }
.cap { width: 80px; color: var(--ink); }
.cap-mark { width: 76px; }
.mark { height: 23px; display: flex; align-items: center; gap: 6px; padding: 0 6px; background: #e4f036; color: #202c50; }
.mark .box { border-color: #8a9750; box-shadow: none; background: #d9e46a; }
.mark .box:checked::after { content: ""; display: block; width: 3px; height: 6px; margin: 0 0 0 3px; border: solid #33451f; border-width: 0 2px 2px 0; transform: rotate(40deg); }
.pick { position: relative; flex: 1; }
.pick select { width: 100%; height: 19px; padding: 0 2px; display: block; appearance: none; border: 1px solid var(--input); border-radius: 0; background: #fff; }
.pick svg { position: absolute; right: 6px; top: 7px; width: 6px; height: 5px; fill: #3e70bd; }
.line { height: 18px; line-height: 16px; }
.semi { color: #8c1a2b; font-weight: 400; }
.form-plan .wide { height: 19px; }

/* Numbered callouts */
.badge {
  position: absolute;
  width: 22px;
  height: 22px;
  border-radius: 50%;
  background: #f00;
  color: #fff;
  font: 16px/22px "Liberation Sans", sans-serif;
  text-align: center;
}
.badge-row { left: 1px; top: 15px; }
.badge-tab { left: -14px; top: 0; }
.badge-form { left: -16px; top: 8px; }
```
